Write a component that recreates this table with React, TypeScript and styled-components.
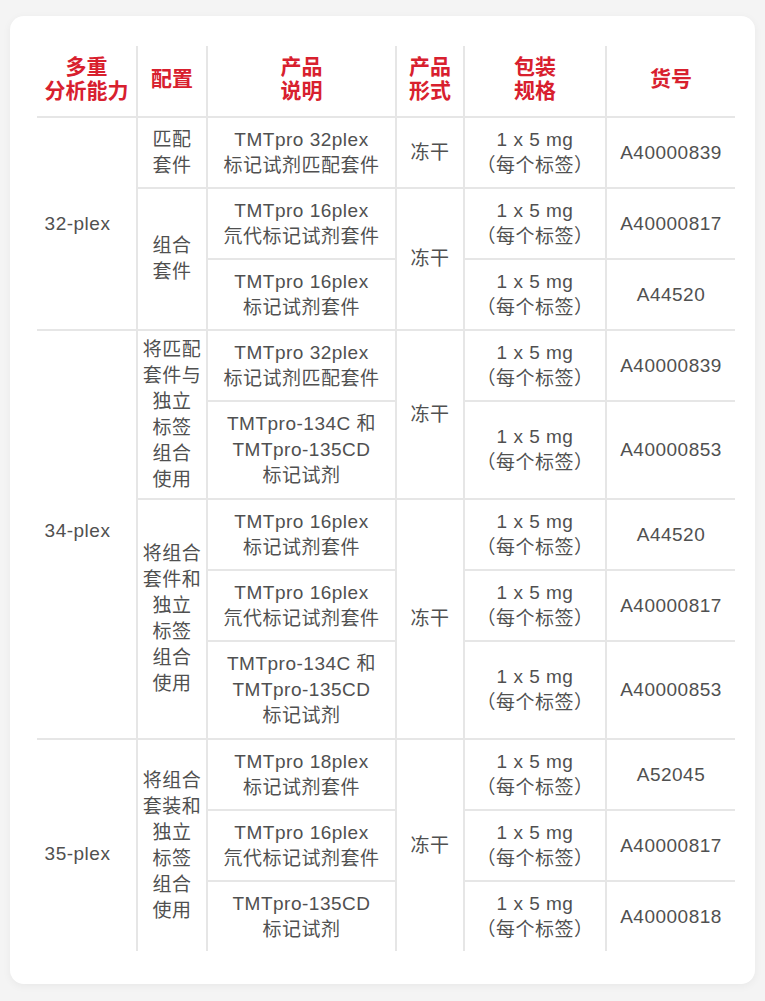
import React from "react";
import styled, { createGlobalStyle } from "styled-components";

const GlobalStyle = createGlobalStyle`
    body {
        margin: 0;
        background: #f4f4f4;
        font-family: "Liberation Sans", "Noto Sans CJK SC", sans-serif;
    }
`;

const Card = styled.div`
    margin: 16px 10px;
    width: 745px;
    box-sizing: border-box;
    padding: 30px 20px 33px 27px;
    background: #ffffff;
    border-radius: 14px;
    box-shadow: 0 2px 8px rgba(0, 0, 0, 0.05);
`;

const Table = styled.table`
    width: 698px;
    table-layout: fixed;
    border-collapse: collapse;
    color: #505050;
    font-size: 19px;
    line-height: 26px;
    letter-spacing: 0.5px;
    text-align: center;
    text-spacing-trim: space-all;

    th:not(:last-child),
    td:not(:last-child) {
        border-right: 2px solid #e6e6e6;
    }
`;

const HeadCell = styled.th`
    color: #d8202e;
    font-family: "Noto Sans CJK SC", sans-serif;
    font-weight: 700;
    font-size: 21px;
    line-height: 24px;
    letter-spacing: 0;
    height: 62px;
    padding: 0 0 8px;
    vertical-align: middle;
`;

const Cell = styled.td<{ $pad?: number; $shift?: number; $dy?: number }>`
    border-top: 2px solid #e6e6e6;
    padding: ${(p) => p.$pad ?? 8.5}px 2px;
    padding-right: ${(p) => p.$shift ?? 2}px;
    ${(p) => (p.$dy && p.$dy > 0 ? `padding-top: ${p.$dy}px;` : "")}
    ${(p) => (p.$dy && p.$dy < 0 ? `padding-bottom: ${-p.$dy}px;` : "")}
    vertical-align: middle;
`;

const Line = styled.div`
    white-space: nowrap;
`;

type Row = {
    product: string[];
    code: string;
};

const rows: Row[] = [
    { product: ["TMTpro 32plex", "标记试剂匹配套件"], code: "A40000839" },
    { product: ["TMTpro 16plex", "氘代标记试剂套件"], code: "A40000817" },
    { product: ["TMTpro 16plex", "标记试剂套件"], code: "A44520" },
    { product: ["TMTpro 32plex", "标记试剂匹配套件"], code: "A40000839" },
    { product: ["TMTpro-134C 和", "TMTpro-135CD", "标记试剂"], code: "A40000853" },
    { product: ["TMTpro 16plex", "标记试剂套件"], code: "A44520" },
    { product: ["TMTpro 16plex", "氘代标记试剂套件"], code: "A40000817" },
    { product: ["TMTpro-134C 和", "TMTpro-135CD", "标记试剂"], code: "A40000853" },
    { product: ["TMTpro 18plex", "标记试剂套件"], code: "A52045" },
    { product: ["TMTpro 16plex", "氘代标记试剂套件"], code: "A40000817" },
    { product: ["TMTpro-135CD", "标记试剂"], code: "A40000818" },
];

// cells that start at a given row: [text, rowSpan, vertical nudge]
const plex: Record<number, [string, number, number]> = {
    0: ["32-plex", 3, 0],
    3: ["34-plex", 5, -16],
    8: ["35-plex", 3, 26],
};

const config: Record<number, [string[], number]> = {
    0: [["匹配", "套件"], 1],
    1: [["组合", "套件"], 2],
    3: [["将匹配", "套件与", "独立", "标签", "组合", "使用"], 2],
    5: [["将组合", "套件和", "独立", "标签", "组合", "使用"], 3],
    8: [["将组合", "套装和", "独立", "标签", "组合", "使用"], 3],
};

const form: Record<number, number> = { 0: 1, 1: 2, 3: 2, 5: 3, 8: 3 };

const lines = (items: string[]) => items.map((t, i) => <Line key={i}>{t}</Line>);

export default function App() {
    return (
        <>
            <GlobalStyle />
            <Card>
                <Table>
                    <colgroup>
                        <col style={{ width: 100 }} />
                        <col style={{ width: 70 }} />
                        <col style={{ width: 189 }} />
                        <col style={{ width: 68 }} />
                        <col style={{ width: 142 }} />
                        <col style={{ width: 129 }} />
                    </colgroup>
                    <thead>
                        <tr>
                            <HeadCell>多重<br />分析能力</HeadCell>
                            <HeadCell>配置</HeadCell>
                            <HeadCell>产品<br />说明</HeadCell>
                            <HeadCell>产品<br />形式</HeadCell>
                            <HeadCell>包装<br />规格</HeadCell>
                            <HeadCell>货号</HeadCell>
                        </tr>
                    </thead>
                    <tbody>
                        {rows.map((row, i) => (
                            <tr key={i}>
                                {plex[i] && (
                                    <Cell rowSpan={plex[i][1]} $shift={20} $dy={plex[i][2]}>
                                        {plex[i][0]}
                                    </Cell>
                                )}
                                {config[i] && (
                                    <Cell rowSpan={config[i][1]} $pad={config[i][0].length > 2 ? 2 : 8.5}>
                                        {lines(config[i][0])}
                                    </Cell>
                                )}
                                <Cell $pad={row.product.length > 2 ? 9 : 8.5}>{lines(row.product)}</Cell>
                                {form[i] && <Cell rowSpan={form[i]}>冻干</Cell>}
                                <Cell>{lines(["1 x 5 mg", "（每个标签）"])}</Cell>
                                <Cell>{row.code}</Cell>
                            </tr>
                        ))}
                    </tbody>
                </Table>
            </Card>
        </>
    );
}
